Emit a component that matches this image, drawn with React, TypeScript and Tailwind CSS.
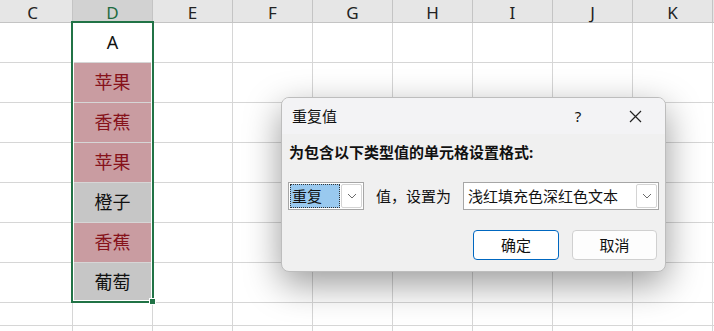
const cols = ['C', 'D', 'E', 'F', 'G', 'H', 'I', 'J', 'K', 'L'];

type Kind = 'plain' | 'red' | 'gray';

const dCells: { text: string; kind: Kind }[] = [
  { text: 'A', kind: 'plain' },
  { text: '苹果', kind: 'red' },
  { text: '香蕉', kind: 'red' },
  { text: '苹果', kind: 'red' },
  { text: '橙子', kind: 'gray' },
  { text: '香蕉', kind: 'red' },
  { text: '葡萄', kind: 'gray' },
  { text: '', kind: 'plain' },
  { text: '', kind: 'plain' },
];

const rowHeights = [
  'h-[40px]', 'h-[40px]', 'h-[40px]', 'h-[40px]', 'h-[40px]',
  'h-[40px]', 'h-[40px]', 'h-[23px]', 'h-[40px]',
];

const kindClass: Record<Kind, string> = {
  plain: 'bg-white text-[#111]',
  red: 'bg-[#c99ca1] text-[#86121a]',
  gray: 'bg-[#c6c6c6] text-[#111]',
};

const font = { fontFamily: '"Noto Sans", "Noto Sans CJK SC", sans-serif' };

const Chevron = () => (
  <svg width="10" height="6" viewBox="0 0 10 6" fill="none">
    <polyline points="1,1 5,5 9,1" stroke="#6b6b6b" strokeWidth="1" />
  </svg>
);

export default function App() {
  return (
    <div className="relative w-[714px] h-[331px] overflow-hidden bg-white" style={font}>
      {/* Sheet */}
      <div className="flex flex-col ml-[-7px]">
        <div className="flex">
          {cols.map((c) => (
            <div
              key={c}
              className={`w-[80px] shrink-0 h-[23px] border-r border-b border-[#c4c4c4] flex items-center justify-center text-[17px] leading-none ${
                c === 'D' ? 'bg-[#d2d2d2] text-[#1e6b40]' : 'bg-[#e6e6e6] text-[#222]'
              }`}
            >
              <span className="mt-[3px]">{c === 'L' ? '' : c}</span>
            </div>
          ))}
        </div>
        {rowHeights.map((h, r) => (
          <div key={r} className="flex">
            {cols.map((c) => {
              const cell = c === 'D' ? dCells[r] : null;
              return (
                <div
                  key={c}
                  className={`w-[80px] shrink-0 ${h} border-r border-b border-[#d6d6d6] flex items-center justify-center text-[18px] ${
                    cell ? kindClass[cell.kind] : 'bg-white'
                  }`}
                >
                  {cell?.text}
                </div>
              );
            })}
          </div>
        ))}
      </div>

      {/* Selection */}
      <div className="absolute left-[71px] top-[21px] w-[83px] h-[282px] border-2 border-[#217346] shadow-[inset_0_0_0_1px_#fff]" />
      <div className="absolute left-[149px] top-[298px] w-[7px] h-[7px] bg-[#217346] border border-white" />

      {/* Dialog */}
      <div className="absolute left-[281px] top-[97px] w-[385px] h-[175px] rounded-[8px] bg-[#f0f0f0] border border-[#bdbdbd] shadow-[0_12px_36px_rgba(0,0,0,0.4)] flex flex-col overflow-hidden text-[#111]">
        <div className="h-[36px] bg-[#f3f3f5] flex items-center text-[15px]">
          <span className="flex-1 pl-[10px]">重复值</span>
          <span className="w-[54px] text-center">?</span>
          <span className="w-[60px] flex justify-center">
            <svg width="13" height="13" viewBox="0 0 13 13">
              <path d="M1 1 L12 12 M12 1 L1 12" stroke="#222" strokeWidth="1.2" />
            </svg>
          </span>
        </div>
        <div className="flex flex-col px-[6px] pt-[8px]">
          <div className="text-[15px] font-bold leading-[20px] pl-[1px]">为包含以下类型值的单元格设置格式:</div>
          <div className="flex items-center mt-[20px] h-[28px]">
            <div className="w-[76px] h-[28px] bg-white border border-[#a6a6a6] flex items-center p-[1px] gap-[1px]">
              <div className="flex-1 h-full bg-[#99c9ef] border border-dotted border-[#333] flex items-center pl-[1px] text-[15px]">
                重复
              </div>
              <div className="w-[21px] h-[24px] border border-[#d4d4d4] rounded-[2px] flex items-center justify-center">
                <Chevron />
              </div>
            </div>
            <span className="ml-[12px] text-[15px]">值，设置为</span>
            <div className="ml-[12px] w-[196px] h-[28px] bg-white border border-[#a6a6a6] flex items-center p-[1px]">
              <div className="flex-1 pl-[3px] text-[15px]">浅红填充色深红色文本</div>
              <div className="w-[21px] h-[24px] border border-[#d4d4d4] rounded-[2px] flex items-center justify-center">
                <Chevron />
              </div>
            </div>
          </div>
          <div className="flex justify-end gap-[13px] mt-[20px] pr-[2px]">
            <button className="w-[86px] h-[30px] bg-white border border-[#0067c0] rounded-[4px] text-[15px]">确定</button>
            <button className="w-[85px] h-[30px] bg-[#fdfdfd] border border-[#d0d0d0] rounded-[4px] text-[15px]">取消</button>
          </div>
        </div>
      </div>
    </div>
  );
}
